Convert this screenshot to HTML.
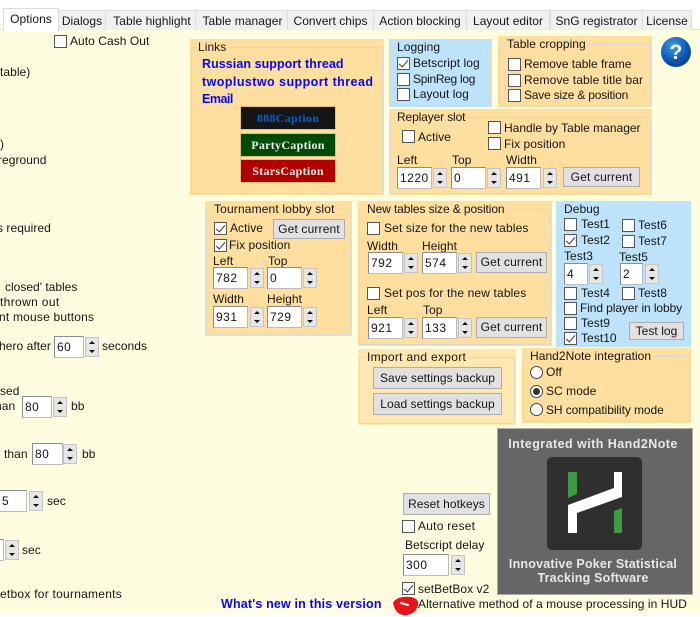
<!DOCTYPE html>
<html><head><meta charset="utf-8"><style>
html,body{margin:0;padding:0;background:#fff}
#r{position:relative;width:700px;height:617px;overflow:hidden;background:#fff;font:12px/14px "Liberation Sans",sans-serif;color:#151515;letter-spacing:.05px}
#r div,#r span{position:absolute;box-sizing:border-box;white-space:nowrap}
.tab{top:10px;height:20px;background:#f0f0f0;border:1px solid #dcdcdc;border-bottom:0;text-align:center;line-height:20px}
.p{background:#ffdf9f}
.p:before{content:"";position:absolute;left:1px;right:1px;top:8px;bottom:1px;border:1px solid #dcd8cb}
.b{background:#bde3fa}
.l{background:inherit;padding:0 2px}
.c{width:13px;height:13px;background:#fff;border:1px solid #555}
.k:after{content:"";position:absolute;left:3px;top:0;width:4px;height:8px;border:solid #333;border-width:0 1.3px 1.3px 0;transform:rotate(40deg)}
.i{height:22px;background:#fff;border:1px solid #8c8c8c;border-right-color:#bbb;border-bottom-color:#bbb;padding-left:2px;line-height:20px;letter-spacing:.5px}
.s{width:14px;height:20px;background:#e6e6e6;border:1px solid #c4c4c4}
.s:before{content:"";position:absolute;left:3px;top:3px;border:3px solid transparent;border-top:0;border-bottom:3px solid #111}
.s:after{content:"";position:absolute;left:3px;top:12px;border:3px solid transparent;border-bottom:0;border-top:3px solid #111}
.bt{background:#e1e1e1;border:1px solid #adadad;text-align:center;line-height:19px}
.o{width:13px;height:13px;border-radius:50%;background:#fff;border:1px solid #444}
.lk{color:#0808f0;font-weight:bold;font-size:12.5px;letter-spacing:.16px}
.cap{left:240px;width:96px;height:24px;font:bold 12px/23px "Liberation Serif",serif;text-align:center;letter-spacing:.3px;border:1px solid #e0c080}
.h{color:#e8e8e8;font-weight:bold;font-size:12.5px;left:495px;width:196px;text-align:center;letter-spacing:.2px}
</style></head><body><div id="r">
<div style="left:0;top:30px;width:700px;height:584px;background:#fffde0"></div>
<div style="left:0;top:8px;width:700px;height:22px;background:#fff"></div>
<div style="left:0;top:29px;width:700px;height:1px;background:#dcdcdc"></div>
<div class="tab" style="left:58px;width:48px">Dialogs</div>
<div class="tab" style="left:105px;width:91px;padding-left:3px">Table highlight</div>
<div class="tab" style="left:195px;width:93px;padding-left:2px">Table manager</div>
<div class="tab" style="left:287px;width:87px">Convert chips</div>
<div class="tab" style="left:373px;width:94px">Action blocking</div>
<div class="tab" style="left:466px;width:84px">Layout editor</div>
<div class="tab" style="left:550px;width:93px">SnG registrator</div>
<div class="tab" style="left:642px;width:50px">License</div>
<div class="tab" style="left:3px;top:8px;width:56px;height:24px;background:#fff;z-index:2;line-height:21px">Options</div>

<div class="c" style="left:54px;top:35px"></div><span style="left:70px;top:34px">Auto Cash Out</span>
<span style="left:0;top:65px">table)</span>
<span style="left:0;top:137px">)</span>
<span style="left:-2px;top:153px">reground</span>
<span style="left:-3px;top:221px">s required</span>
<span style="left:5px;top:280px;letter-spacing:0">closed' tables</span>
<span style="left:0;top:295px;letter-spacing:.35px">thrown out</span>
<span style="left:-1px;top:310px;letter-spacing:.2px">nt mouse buttons</span>
<span style="left:-1px;top:339px">hero after</span>
<div class="i" style="left:54px;top:336px;width:30px">60</div><div class="s" style="left:85px;top:337px"></div>
<span style="left:102px;top:339px">seconds</span>
<span style="left:0;top:384px">sed</span>
<span style="left:-5px;top:399px">han</span>
<div class="i" style="left:22px;top:396px;width:30px">80</div><div class="s" style="left:53px;top:397px"></div>
<span style="left:71px;top:399px">bb</span>
<span style="left:4px;top:447px">than</span>
<div class="i" style="left:32px;top:443px;width:31px">80</div><div class="s" style="left:63px;top:444px"></div>
<span style="left:82px;top:447px">bb</span>
<div class="i" style="left:-5px;top:490px;width:32px;padding-left:6px">5</div><div class="s" style="left:29px;top:491px"></div>
<span style="left:47px;top:494px">sec</span>
<div class="i" style="left:-20px;top:539px;width:24px"></div><div class="s" style="left:5px;top:540px"></div>
<span style="left:22px;top:543px">sec</span>
<span style="left:0;top:587px;letter-spacing:.25px">etbox for tournaments</span>

<div class="p" style="left:190px;top:39px;width:194px;height:156px"></div>
<span class="l" style="left:196px;top:40px;background:#ffdf9f">Links</span>
<span class="lk" style="left:202px;top:57px;letter-spacing:.06px">Russian support thread</span>
<span class="lk" style="left:202px;top:75px;letter-spacing:.44px">twoplustwo support thread</span>
<span class="lk" style="left:202px;top:92px;letter-spacing:-.5px">Email</span>
<div class="cap" style="top:106px;background:#151515;color:#0060d0">888Caption</div>
<div class="cap" style="top:133px;background:#004a08;color:#eee">PartyCaption</div>
<div class="cap" style="top:159px;background:#b00000;color:#eee">StarsCaption</div>

<div class="p b" style="left:389px;top:39px;width:103px;height:68px"></div>
<span class="l" style="left:395px;top:40px;background:#bde3fa">Logging</span>
<div class="c k" style="left:397px;top:57px"></div><span style="left:413px;top:56px">Betscript log</span>
<div class="c" style="left:397px;top:73px"></div><span style="left:413px;top:72px;letter-spacing:-.3px">SpinReg log</span>
<div class="c" style="left:397px;top:88px"></div><span style="left:413px;top:87px">Layout log</span>

<div class="p" style="left:498px;top:36px;width:154px;height:71px"></div>
<span class="l" style="left:505px;top:37px;background:#ffdf9f">Table cropping</span>
<div class="c" style="left:508px;top:58px"></div><span style="left:524px;top:57px;letter-spacing:-.03px">Remove table frame</span>
<div class="c" style="left:508px;top:74px"></div><span style="left:524px;top:73px;letter-spacing:.11px">Remove table title bar</span>
<div class="c" style="left:508px;top:89px"></div><span style="left:524px;top:88px;letter-spacing:-.2px">Save size &amp; position</span>

<div class="p" style="left:389px;top:109px;width:263px;height:86px"></div>
<span class="l" style="left:395px;top:110px;background:#ffdf9f;letter-spacing:-.13px">Replayer slot</span>
<div class="c" style="left:402px;top:130px"></div><span style="left:418px;top:130px">Active</span>
<div class="c" style="left:488px;top:121px"></div><span style="left:504px;top:121px;letter-spacing:0">Handle by Table manager</span>
<div class="c" style="left:488px;top:137px"></div><span style="left:504px;top:137px">Fix position</span>
<span style="left:397px;top:153px">Left</span><span style="left:452px;top:153px">Top</span><span style="left:506px;top:153px">Width</span>
<div class="i" style="left:397px;top:167px;width:35px">1220</div><div class="s" style="left:433px;top:168px"></div>
<div class="i" style="left:451px;top:167px;width:35px">0</div><div class="s" style="left:487px;top:168px"></div>
<div class="i" style="left:506px;top:167px;width:35px">491</div><div class="s" style="left:543px;top:168px"></div>
<div class="bt" style="left:563px;top:167px;width:77px;height:20px;letter-spacing:.15px">Get current</div>

<div class="p" style="left:205px;top:201px;width:147px;height:135px"></div>
<span class="l" style="left:212px;top:202px;background:#ffdf9f;letter-spacing:.15px">Tournament lobby slot</span>
<div class="c k" style="left:214px;top:222px"></div><span style="left:230px;top:221px">Active</span>
<div class="bt" style="left:273px;top:219px;width:72px;height:20px;letter-spacing:.15px">Get current</div>
<div class="c k" style="left:214px;top:239px"></div><span style="left:229px;top:238px">Fix position</span>
<span style="left:213px;top:254px">Left</span><span style="left:268px;top:254px">Top</span>
<div class="i" style="left:213px;top:267px;width:35px">782</div><div class="s" style="left:250px;top:268px"></div>
<div class="i" style="left:267px;top:267px;width:35px">0</div><div class="s" style="left:303px;top:268px"></div>
<span style="left:213px;top:292px">Width</span><span style="left:267px;top:292px">Height</span>
<div class="i" style="left:213px;top:306px;width:35px">931</div><div class="s" style="left:250px;top:307px"></div>
<div class="i" style="left:267px;top:306px;width:35px">729</div><div class="s" style="left:303px;top:307px"></div>

<div class="p" style="left:358px;top:201px;width:194px;height:145px"></div>
<span class="l" style="left:365px;top:202px;background:#ffdf9f;letter-spacing:-.1px">New tables size &amp; position</span>
<div class="c" style="left:367px;top:222px"></div><span style="left:384px;top:221px;letter-spacing:.14px">Set size for the new tables</span>
<span style="left:367px;top:239px">Width</span><span style="left:422px;top:239px">Height</span>
<div class="i" style="left:368px;top:252px;width:35px">792</div><div class="s" style="left:404px;top:253px"></div>
<div class="i" style="left:422px;top:252px;width:35px">574</div><div class="s" style="left:458px;top:253px"></div>
<div class="bt" style="left:476px;top:252px;width:71px;height:21px;letter-spacing:.15px">Get current</div>
<div class="c" style="left:367px;top:287px"></div><span style="left:384px;top:286px;letter-spacing:.14px">Set pos for the new tables</span>
<span style="left:367px;top:303px">Left</span><span style="left:423px;top:303px">Top</span>
<div class="i" style="left:368px;top:317px;width:35px">921</div><div class="s" style="left:404px;top:318px"></div>
<div class="i" style="left:422px;top:317px;width:35px">133</div><div class="s" style="left:458px;top:318px"></div>
<div class="bt" style="left:476px;top:317px;width:71px;height:21px;letter-spacing:.15px">Get current</div>

<div class="b" style="left:556px;top:201px;width:135px;height:146px"></div>
<span style="left:564px;top:202px">Debug</span>
<div class="c" style="left:564px;top:218px"></div><span style="left:581px;top:217px">Test1</span>
<div class="c" style="left:622px;top:219px"></div><span style="left:638px;top:218px">Test6</span>
<div class="c k" style="left:564px;top:234px"></div><span style="left:581px;top:233px">Test2</span>
<div class="c" style="left:622px;top:235px"></div><span style="left:638px;top:234px">Test7</span>
<span style="left:564px;top:249px">Test3</span><span style="left:619px;top:250px">Test5</span>
<div class="i" style="left:564px;top:263px;width:24px">4</div><div class="s" style="left:589px;top:264px"></div>
<div class="i" style="left:620px;top:263px;width:23px">2</div><div class="s" style="left:645px;top:264px"></div>
<div class="c" style="left:564px;top:287px"></div><span style="left:581px;top:286px">Test4</span>
<div class="c" style="left:622px;top:287px"></div><span style="left:638px;top:286px">Test8</span>
<div class="c" style="left:564px;top:302px"></div><span style="left:580px;top:301px;letter-spacing:-.1px">Find player in lobby</span>
<div class="c" style="left:564px;top:317px"></div><span style="left:581px;top:316px">Test9</span>
<div class="c k" style="left:564px;top:332px"></div><span style="left:581px;top:331px">Test10</span>
<div class="bt" style="left:629px;top:322px;width:55px;height:18px;line-height:17px">Test log</div>

<div class="p" style="left:358px;top:349px;width:158px;height:76px;background:#ffe7b0"></div>
<span class="l" style="left:365px;top:350px;background:#ffe7b0;letter-spacing:.3px">Import and export</span>
<div class="bt" style="left:373px;top:367px;width:129px;height:22px;line-height:21px">Save settings backup</div>
<div class="bt" style="left:373px;top:393px;width:129px;height:22px;line-height:21px">Load settings backup</div>

<div class="p" style="left:522px;top:348px;width:169px;height:75px"></div>
<span class="l" style="left:528px;top:349px;background:#ffdf9f">Hand2Note integration</span>
<div class="o" style="left:530px;top:366px"></div><span style="left:546px;top:365px">Off</span>
<div class="o" style="left:530px;top:385px"></div><div style="left:533px;top:388px;width:7px;height:7px;border-radius:50%;background:#333"></div><span style="left:546px;top:384px">SC mode</span>
<div class="o" style="left:530px;top:403px"></div><span style="left:546px;top:403px;letter-spacing:-.08px">SH compatibility mode</span>

<div class="bt" style="left:403px;top:493px;width:87px;height:22px;line-height:21px">Reset hotkeys</div>
<div class="c" style="left:402px;top:520px"></div><span style="left:418px;top:519px;letter-spacing:.25px">Auto reset</span>
<span style="left:405px;top:538px">Betscript delay</span>
<div class="i" style="left:403px;top:554px;width:46px">300</div><div class="s" style="left:451px;top:555px"></div>
<div class="c k" style="left:402px;top:582px"></div><span style="left:418px;top:582px">setBetBox v2</span>

<div style="left:497px;top:428px;width:196px;height:167px;background:#666;border:1px solid #aaa"></div>
<span class="h" style="top:437px;letter-spacing:.45px">Integrated with Hand2Note</span>
<span class="h" style="top:557px">Innovative Poker Statistical</span>
<span class="h" style="top:571px">Tracking Software</span>
<svg style="position:absolute;left:0;top:0" width="700" height="617">
<rect x="547" y="457" width="95" height="93" rx="5" fill="#2f2f2f"/>
<polygon points="568,472 577,472 577,494 568,498" fill="#3e9b45"/>
<polygon points="614,511 622,508 622,533 614,533" fill="#3e9b45"/>
<polygon points="614,472 622,472 622,497 577,513 577,533 568,533 568,505 614,488" fill="#fff"/>
<path d="M393 603c2-5 10-7 16-6 7 0 10 4 9 8-1 5-5 9-11 10-7 1-12-3-14-12z" fill="#e8121a"/>
<path d="M401 603l7 2" stroke="#fff" stroke-width="2" stroke-linecap="round"/>
<defs><radialGradient id="g" cx=".4" cy=".3" r=".8"><stop offset="0" stop-color="#3f9be8"/><stop offset=".6" stop-color="#0c58b8"/><stop offset="1" stop-color="#063a80"/></radialGradient></defs>
<circle cx="676" cy="52" r="15" fill="url(#g)"/>
<text x="676" y="59" text-anchor="middle" font-family="Liberation Sans" font-weight="bold" font-size="21" fill="#fff">?</text>
</svg>
<span class="lk" style="left:221px;top:597px">What's new in this version</span>
<span style="left:418px;top:597px;letter-spacing:.06px">Alternative method of a mouse processing in HUD</span>
</div></body></html>
